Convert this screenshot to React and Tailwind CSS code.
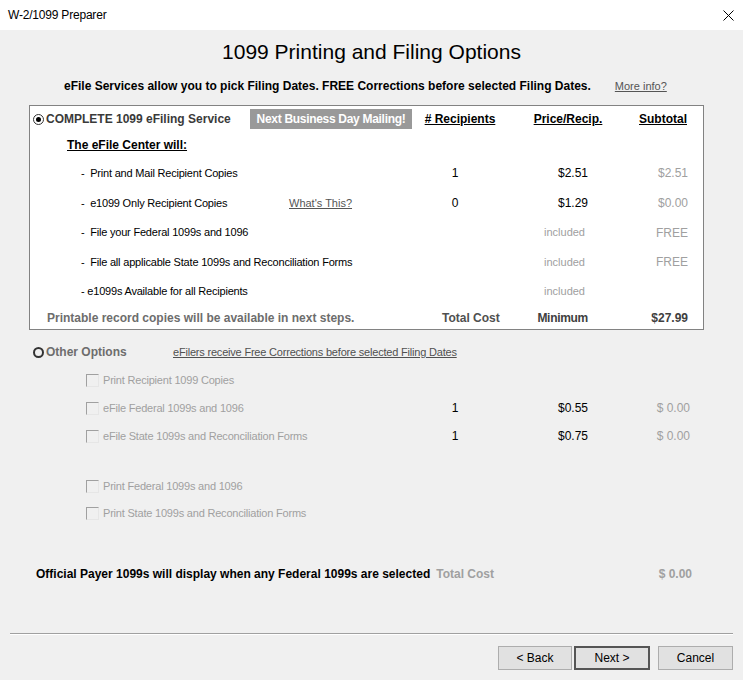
import React from 'react'

// ── helpers ────────────────────────────────────────────────────────────────

function Radio({ checked }) {
  return checked ? (
    <span className="flex h-[11px] w-[11px] shrink-0 items-center justify-center rounded-full border border-[#333] bg-white">
      <span className="h-[5px] w-[5px] rounded-full bg-black" />
    </span>
  ) : (
    <span className="h-[11px] w-[11px] shrink-0 rounded-full border-2 border-[#333] bg-[#f0f0f0]" />
  )
}

function Check() {
  return (
    <span className="h-[13px] w-[13px] shrink-0 border border-t-[#a0a0a0] border-l-[#a0a0a0] border-r-[#e6e6e6] border-b-[#e6e6e6] bg-[#f0f0f0]" />
  )
}

const ITEMS = [
  { label: '-  Print and Mail Recipient Copies', rec: '1', price: '$2.51', sub: '$2.51' },
  { label: '-  e1099 Only Recipient Copies', link: "What's This?", rec: '0', price: '$1.29', sub: '$0.00' },
  { label: '-  File your Federal 1099s and 1096', price: 'included', sub: 'FREE', h: 'h-[29px]' },
  { label: '-  File all applicable State 1099s and Reconciliation Forms', price: 'included', sub: 'FREE' },
  { label: '- e1099s Available for all Recipients', price: 'included', h: 'h-[29px]' },
]

const OPTIONS = [
  { label: 'Print Recipient 1099 Copies' },
  { label: 'eFile Federal 1099s and 1096', rec: '1', price: '$0.55', sub: '$ 0.00' },
  { label: 'eFile State 1099s and Reconciliation Forms', rec: '1', price: '$0.75', sub: '$ 0.00' },
]

// ── component ──────────────────────────────────────────────────────────────

export default function App() {
  return (
    <div className="h-[680px] w-[743px] overflow-hidden bg-[#f0f0f0] font-['Liberation_Sans',Arial,sans-serif] text-black">

      {/* title bar */}
      <div className="flex h-[30px] items-center justify-between bg-white pl-[8px] pr-[9px]">
        <span className="text-[12px] tracking-[-0.2px]">W-2/1099 Preparer</span>
        <svg width="11" height="11" viewBox="0 0 11 11">
          <path d="M0.5 0.5 L10.5 10.5 M10.5 0.5 L0.5 10.5" stroke="#000" strokeWidth="1" fill="none" />
        </svg>
      </div>

      {/* heading */}
      <div className="mt-[8px] flex h-[28px] items-center justify-center text-[21px]">
        1099 Printing and Filing Options
      </div>
      <div className="mt-[10px] flex h-[20px] items-center pl-[64px] text-[12px]">
        <span className="font-bold">
          eFile Services allow you to pick Filing Dates. FREE Corrections before selected Filing Dates.
        </span>
        <span className="ml-[24px] text-[11px] text-[#555] underline">More info?</span>
      </div>

      {/* eFiling service box */}
      <div className="ml-[29px] mt-[9px] w-[675px] border border-[#828282] bg-white">
        <div className="flex h-[26px] items-center">
          <div className="flex w-[220px] items-center gap-[2px] pl-[3px]">
            <Radio checked />
            <span className="text-[12px] font-bold text-[#3a3a3a]">COMPLETE 1099 eFiling Service</span>
          </div>
          <div className="flex h-[20px] w-[162px] items-center justify-center whitespace-nowrap bg-[#999] text-[12px] font-bold tracking-[-0.3px] text-white">
            Next Business Day Mailing!
          </div>
          <span className="w-[96px] text-center text-[12px] font-bold underline">
            # Recipients
          </span>
          <span className="w-[120px] text-center text-[12px] font-bold underline">Price/Recip.</span>
          <span className="w-[59px] text-right text-[12px] font-bold underline">Subtotal</span>
        </div>

        <div className="flex h-[26px] items-center pl-[37px] text-[12px] font-bold underline">
          The eFile Center will:
        </div>

        {ITEMS.map(it => (
          <div
            key={it.label}
            className={`grid grid-cols-[390px_70px_98px_100px] items-center text-[12px] ${it.h ?? 'h-[30px]'}`}
          >
            <div className="flex items-center whitespace-pre pl-[51px] text-[11px] tracking-[-0.2px]">
              <span className={it.link ? 'w-[208px]' : ''}>{it.label}</span>
              {it.link && <span className="tracking-normal text-[#555] underline">{it.link}</span>}
            </div>
            <span className="text-center">{it.rec}</span>
            <span className={`text-right ${it.price === 'included' ? 'pr-[3px] text-[11px] text-[#a0a0a0]' : ''}`}>
              {it.price}
            </span>
            <span className="text-right text-[#a0a0a0]">{it.sub}</span>
          </div>
        ))}

        <div className="grid h-[23px] grid-cols-[390px_70px_98px_100px] items-center text-[12px] font-bold">
          <div className="flex items-center">
            <span className="pl-[17px] text-[#6d6d6d]">Printable record copies will be available in next steps.</span>
          </div>
          <span className="ml-[22px] whitespace-nowrap text-[#505050]">Total Cost</span>
          <span className="text-right tracking-[-0.3px] text-[#404040]">Minimum</span>
          <span className="text-right text-[#404040]">$27.99</span>
        </div>
      </div>

      {/* other options */}
      <div className="mt-[10px] flex h-[24px] items-center gap-[2px] pl-[33px]">
        <Radio />
        <span className="w-[125px] text-[12px] font-bold text-[#6d6d6d]">Other Options</span>
        <span className="text-[11px] tracking-[-0.2px] text-[#505050] underline">
          eFilers receive Free Corrections before selected Filing Dates
        </span>
      </div>

      <div className="mt-[2px] pl-[30px]">
        {OPTIONS.map(o => (
          <div key={o.label} className="grid h-[28px] grid-cols-[390px_70px_98px_102px] items-center text-[12px]">
            <div className="flex items-center gap-[4px] pl-[56px]">
              <Check />
              <span className="text-[11px] tracking-[-0.2px] text-[#a0a0a0]">{o.label}</span>
            </div>
            <span className="text-center">{o.rec}</span>
            <span className="text-right">{o.price}</span>
            <span className="text-right text-[#a0a0a0]">{o.sub}</span>
          </div>
        ))}

        <div className="h-[23px]" />

        {['Print Federal 1099s and 1096', 'Print State 1099s and Reconciliation Forms'].map(l => (
          <div key={l} className="flex h-[27px] items-center gap-[4px] pl-[56px]">
            <Check />
            <span className="text-[11px] tracking-[-0.2px] text-[#a0a0a0]">{l}</span>
          </div>
        ))}
      </div>

      {/* payer note */}
      <div className="mt-[35px] flex h-[24px] items-center pl-[36px] pr-[51px] text-[12px] font-bold">
        <span>Official Payer 1099s will display when any Federal 1099s are selected</span>
        <span className="ml-[6px] text-[#a0a0a0]">Total Cost</span>
        <span className="ml-auto text-[#a0a0a0]">$ 0.00</span>
      </div>

      {/* footer */}
      <div className="mx-[10px] mt-[47px] h-[2px] border-t border-[#a0a0a0] bg-white" />
      <div className="mt-[11px] flex items-center justify-end pr-[10px] text-[12px]">
        <button className="h-[24px] w-[74px] border border-[#adadad] bg-[#e1e1e1]">&lt; Back</button>
        <button className="ml-[2px] h-[24px] w-[76px] border-2 border-[#555] bg-[#e1e1e1]">Next &gt;</button>
        <button className="ml-[8px] h-[24px] w-[75px] border border-[#adadad] bg-[#e1e1e1]">Cancel</button>
      </div>
    </div>
  )
}
